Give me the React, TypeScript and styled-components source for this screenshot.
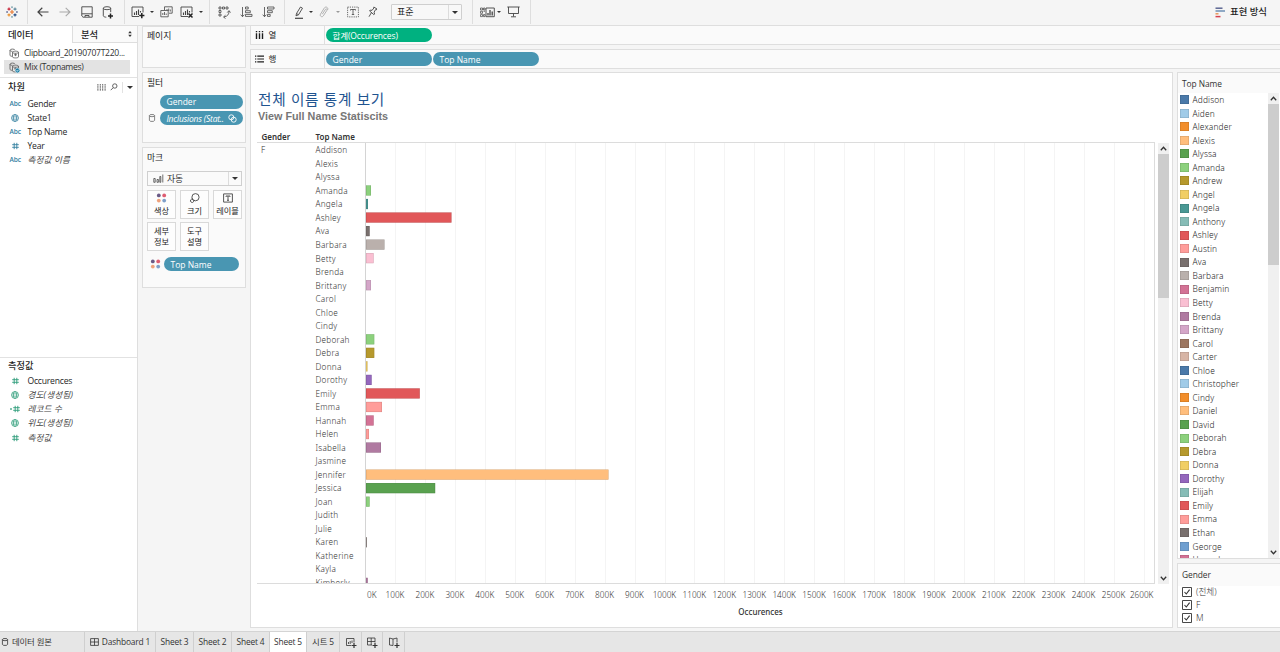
import React from "react";
import styled, { createGlobalStyle } from "styled-components";

const GlobalStyle = createGlobalStyle`
  * { box-sizing: border-box; }
  body {
    margin: 0;
    background: #f5f5f5;
    color: #1e1e1e;
    font-family: "Open Sans", "Noto Sans CJK KR", sans-serif;
    font-size: 8.6px;
    line-height: 14px;
    overflow: hidden;
  }
`;

const BLUE = "#4996b2";
const GREEN = "#00b180";

/* ---------- shell ---------- */

const Page = styled.div`
  width: 1280px;
  height: 652px;
  display: flex;
  flex-direction: column;
  background: #f5f5f5;
  white-space: nowrap;
`;

const Workspace = styled.div`
  flex: 1;
  min-height: 0;
  display: flex;
`;

/* ---------- toolbar ---------- */

const Toolbar = styled.header`
  height: 26px;
  flex: none;
  display: flex;
  background: #f5f5f5;
  border-bottom: 1px solid #dedede;
`;

const ToolGroup = styled.div<{ $w: number; $pl?: number }>`
  width: ${(p) => p.$w}px;
  padding-left: ${(p) => p.$pl ?? 0}px;
  display: flex;
  align-items: center;
  border-right: 1px solid #dedede;
  height: 24px;
`;

const ToolButton = styled.div<{ $w: number; $dim?: boolean }>`
  width: ${(p) => p.$w}px;
  flex: none;
  display: flex;
  justify-content: center;
  align-items: center;
  color: ${(p) => (p.$dim ? "#a9a9a9" : "#444")};
  svg { flex: none; }
`;

const Caret = styled.i<{ $size?: number; $dim?: boolean }>`
  width: 0;
  height: 0;
  border: ${(p) => p.$size ?? 2}px solid transparent;
  border-top-color: ${(p) => (p.$dim ? "#999" : "#333")};
  border-bottom: 0;
`;

const FitSelect = styled.div`
  margin-left: 9px;
  width: 71px;
  height: 16px;
  border: 1px solid #cfcfcf;
  border-radius: 1px;
  background: #f8f8f8;
  display: flex;
  align-items: center;
  padding-left: 5px;
  font-size: 9px;
`;

const SelectArrow = styled.div`
  margin-left: auto;
  width: 13px;
  height: 100%;
  border-left: 1px solid #dcdcdc;
  display: flex;
  align-items: center;
  justify-content: center;
`;

const ShowMe = styled.div`
  margin-left: auto;
  padding-right: 13px;
  display: flex;
  align-items: center;
  gap: 5px;
  font-size: 9.4px;
  font-weight: 500;
  height: 24px;
`;

/* ---------- data pane ---------- */

const DataPane = styled.aside`
  width: 138px;
  flex: none;
  display: flex;
  flex-direction: column;
  background: #fff;
  border-right: 1px solid #dedede;
`;

const PaneTabs = styled.div`
  display: flex;
  height: 17px;
  flex: none;
  font-size: 9.3px;
  line-height: 17px;
  font-weight: 500;
`;

const PaneTab = styled.div<{ $active?: boolean }>`
  width: ${(p) => (p.$active ? 72 : 65)}px;
  padding: 0 5px 0 8px;
  display: flex;
  justify-content: space-between;
  align-items: center;
  border-left: ${(p) => (p.$active ? 0 : 1)}px solid #dedede;
  border-bottom: ${(p) => (p.$active ? 0 : 1)}px solid #dedede;
  background: ${(p) => (p.$active ? "#fff" : "#fafafa")};
`;

const SourceList = styled.div`
  height: 35px;
  flex: none;
  padding: 3px 7px 0 4px;
  border-bottom: 1px solid #e2e2e2;
`;

const Source = styled.div<{ $selected?: boolean }>`
  height: 14px;
  display: flex;
  align-items: center;
  gap: 4px;
  padding-left: 5px;
  letter-spacing: -0.3px;
  background: ${(p) => (p.$selected ? "#e3e3e3" : "transparent")};
  color: #333;
  svg { flex: none; color: #555; }
`;

const SectionHead = styled.div<{ $tight?: boolean }>`
  height: ${(p) => (p.$tight ? 16.5 : 18.5)}px;
  flex: none;
  padding: 0 4px 0 8px;
  display: flex;
  align-items: center;
  font-size: 9.2px;
  font-weight: 500;
`;

const SectionTools = styled.div`
  margin-left: auto;
  height: 11px;
  display: flex;
  align-items: center;
  gap: 4px;
  color: #555;
`;

const ToolsDivider = styled.span`
  width: 1px;
  height: 11px;
  background: #e2e2e2;
`;

const Fields = styled.div`
  height: 260px;
`;

const Field = styled.div<{ $italic?: boolean }>`
  height: 14.15px;
  display: flex;
  align-items: center;
  font-style: ${(p) => (p.$italic ? "italic" : "normal")};
  letter-spacing: ${(p) => (p.$italic ? 0.15 : -0.22)}px;
  color: ${(p) => (p.$italic ? "#444" : "#1e1e1e")};
`;

const FieldIcon = styled.div<{ $green?: boolean }>`
  width: 27.5px;
  padding-left: 3px;
  display: flex;
  justify-content: center;
  font-style: normal;
  letter-spacing: 0;
  color: ${(p) => (p.$green ? "#2c9c79" : "#33809f")};
`;

const Abc = styled.span`
  font-size: 6.6px;
  font-weight: 600;
`;

const Measures = styled.div`
  flex: 1;
  border-top: 1px solid #e2e2e2;
`;

/* ---------- cards ---------- */

const Cards = styled.div`
  width: 104px;
  margin-left: 4px;
  flex: none;
  display: flex;
  flex-direction: column;
  gap: 4px;
`;

const Card = styled.section<{ $h: number; $pt?: number }>`
  height: ${(p) => p.$h}px;
  border: 1px solid #dedede;
  background: #fafafa;
  padding: ${(p) => p.$pt ?? 2}px 3px 0 4px;
  font-size: 8.8px;
`;

const CardTitle = styled.div<{ $h?: number }>`
  height: ${(p) => p.$h ?? 16}px;
  line-height: 16px;
`;

const PillRow = styled.div<{ $mt?: number }>`
  margin-top: ${(p) => p.$mt ?? 0}px;
  display: flex;
  align-items: center;
  height: 16.5px;
`;

const PillLead = styled.div<{ $w: number }>`
  width: ${(p) => p.$w}px;
  flex: none;
  display: flex;
  justify-content: center;
  color: #666;
`;

const Pill = styled.div<{ $w: number; $green?: boolean; $italic?: boolean }>`
  width: ${(p) => p.$w}px;
  height: 14px;
  flex: none;
  border-radius: 7px;
  background: ${(p) => (p.$green ? GREEN : BLUE)};
  color: #fff;
  padding: 0 6.5px;
  display: flex;
  align-items: center;
  justify-content: space-between;
  font-size: 8.5px;
  line-height: 13px;
  letter-spacing: ${(p) => (p.$italic ? "-0.2px" : p.$green ? "-0.12px" : "0")};
  font-style: ${(p) => (p.$italic ? "italic" : "normal")};
  svg { flex: none; }
`;

const MarkSelect = styled.div`
  height: 15px;
  width: 95px;
  margin: 5px 0 4px;
  border: 1px solid #cfcfcf;
  background: #fafafa;
  display: flex;
  align-items: center;
  gap: 3px;
  padding-left: 5px;
  color: #333;
`;

const MarkGrid = styled.div`
  display: grid;
  grid-template-columns: repeat(3, 29px);
  gap: 3px 4px;
`;

const MarkButton = styled.div`
  height: 29px;
  border: 1px solid #d9d9d9;
  background: #fdfdfd;
  display: flex;
  flex-direction: column;
  align-items: center;
  justify-content: center;
  font-size: 8.2px;
  line-height: 10.5px;
  color: #222;
  svg { margin-bottom: 3px; color: #444; }
`;

/* ---------- shelves ---------- */

const Main = styled.div`
  flex: 1;
  min-width: 0;
  margin-left: 4px;
  display: flex;
  flex-direction: column;
`;

const Shelf = styled.div`
  height: 19px;
  flex: none;
  margin-bottom: 4px;
  border: 1px solid #dedede;
  border-width: 0 0 1px 1px;
  background: #fafafa;
  display: flex;
  align-items: center;
  gap: 1px;
  & + & { border-top-width: 1px; height: 20px; margin-bottom: 3px; }
`;

const ShelfLabel = styled.div`
  width: 74px;
  height: 100%;
  padding-left: 4px;
  display: flex;
  align-items: center;
  gap: 4.5px;
  border-right: 1px solid #dedede;
  font-size: 8.5px;
`;

const ViewRow = styled.div`
  flex: 1;
  min-height: 0;
  display: flex;
  gap: 4px;
  padding-bottom: 3px;
`;

/* ---------- chart view ---------- */

const View = styled.section`
  width: 923px;
  flex: none;
  background: #fff;
  border: 1px solid #dedede;
  padding: 18px 3px 0 6px;
  display: flex;
  flex-direction: column;
`;

const Title = styled.h1`
  margin: 0;
  height: 17px;
  padding-left: 1px;
  font: 400 14.6px/17px "Open Sans", "Noto Sans CJK KR", sans-serif;
  letter-spacing: 0.75px;
  color: #1f5490;
`;

const SubTitle = styled.h2`
  margin: 0;
  height: 16px;
  padding-left: 1px;
  font: 700 10.8px/16px "Liberation Sans", Arial, sans-serif;
  color: #767676;
`;

const HeaderRow = styled.div`
  margin-top: 7px;
  height: 12px;
  width: 898px;
  display: flex;
  align-items: center;
  border-bottom: 1px solid #dcdcdc;
  font: 600 8px/10px "Noto Sans", sans-serif;
  color: #333;
`;

const HeaderCell = styled.div<{ $w: number }>`
  width: ${(p) => p.$w}px;
  padding: 1px 0 0 4.5px;
`;

const PlotRow = styled.div`
  height: 441px;
  display: flex;
  gap: 3px;
`;

const Plot = styled.div`
  width: 898px;
  height: 441px;
  display: flex;
  overflow: hidden;
  border-right: 1px solid #dcdcdc;
  border-bottom: 1px solid #dcdcdc;
  font-family: "Noto Sans", sans-serif;
  font-weight: 300;
  font-size: 8.2px;
  color: #333;
`;

const GroupCell = styled.div`
  width: 54px;
  padding-left: 4px;
  line-height: 13px;
`;

const NameList = styled.div`
  width: 54px;
  padding: 0.4px 0 0 4.5px;
  flex: none;
`;

const NameCell = styled.div`
  height: 13.53px;
  line-height: 13.53px;
  letter-spacing: 0.25px;
`;

const Axis = styled.div`
  display: flex;
  width: 898px;
  padding-left: 110px;
  height: 22px;
  font: 300 8.2px/22px "Noto Sans", sans-serif;
  color: #333;
`;

const Tick = styled.div<{ $w: number; $align?: string }>`
  width: ${(p) => p.$w}px;
  flex: none;
  text-align: ${(p) => p.$align ?? "center"};
`;

const AxisTitle = styled.div`
  padding-left: 109px;
  width: 898px;
  text-align: center;
  font: 500 8px/11px "Noto Sans", sans-serif;
  color: #333;
`;

const ScrollTrack = styled.div`
  width: 11px;
  flex: none;
  display: flex;
  flex-direction: column;
  align-items: center;
  background: #f0f0f0;
`;

const ScrollEnd = styled.div`
  height: 11px;
  display: flex;
  align-items: center;
  color: #333;
`;

const ScrollThumb = styled.div<{ $h: number }>`
  width: 100%;
  height: ${(p) => p.$h}px;
  margin-bottom: auto;
  background: #cdcdcd;
`;

/* ---------- right rail ---------- */

const Rail = styled.aside`
  flex: 1;
  display: flex;
  flex-direction: column;
  gap: 4px;
`;

const RailCard = styled.section<{ $h: number }>`
  height: ${(p) => p.$h}px;
  border: 1px solid #dedede;
  border-right: 0;
  background: #fff;
  display: flex;
  flex-direction: column;
`;

const RailTitle = styled.div<{ $h?: number }>`
  height: ${(p) => p.$h ?? 20}px;
  flex: none;
  padding-left: 4px;
  line-height: 22.5px;
  background: #fafafa;
  color: #333;
  font-size: 8.4px;
  letter-spacing: -0.05px;
`;

const LegendBody = styled.div`
  flex: 1;
  min-height: 0;
  display: flex;
  padding-right: 1px;
  overflow: hidden;
`;

const LegendList = styled.div`
  flex: 1;
  overflow: hidden;
`;

const LegendItem = styled.div`
  height: 13.54px;
  padding-left: 2px;
  display: flex;
  align-items: center;
  gap: 3.5px;
  font: 300 8.4px/13.5px "Noto Sans", sans-serif;
  letter-spacing: 0.15px;
  color: #222;
`;

const Swatch = styled.span<{ $c: string }>`
  width: 9px;
  height: 9px;
  background: ${(p) => p.$c};
  box-shadow: inset 0 0 0 0.5px rgba(0, 0, 0, 0.18);
`;

const CheckRow = styled.div`
  height: 12.8px;
  flex: none;
  padding-left: 4px;
  display: flex;
  align-items: center;
  gap: 4px;
  font: 300 8.6px/13px "Noto Sans", "Noto Sans CJK KR", sans-serif;
  color: #333;
`;

/* ---------- sheet tabs ---------- */

const SheetBar = styled.footer`
  height: 21px;
  flex: none;
  display: flex;
  background: #e6e6e6;
  border-top: 1px solid #d4d4d4;
`;

const SheetTab = styled.div<{ $w: number; $active?: boolean; $left?: boolean }>`
  width: ${(p) => p.$w}px;
  display: flex;
  align-items: center;
  justify-content: ${(p) => (p.$left ? "flex-start" : "center")};
  gap: 3px;
  padding-left: ${(p) => (p.$left ? 1 : 0)}px;
  border-right: 1px solid #cfcfcf;
  background: ${(p) => (p.$active ? "#fff" : "transparent")};
  color: #333;
  font-size: 8.4px;
  letter-spacing: -0.15px;
`;

/* ---------- icons ---------- */

type IconProps = { w?: number; h?: number; children: React.ReactNode; box?: string; sw?: number };
const Icon = ({ w = 14, h = 14, box, sw = 1, children }: IconProps) => (
  <svg width={w} height={h} viewBox={box ?? `0 0 ${w} ${h}`} fill="none" stroke="currentColor" strokeWidth={sw}>
    {children}
  </svg>
);

const Logo = () => (
  <Icon w={12} h={12} sw={1.1}>
    <path d="M6 4v4M4 6h4" stroke="#e8762c" />
    <path d="M3 1.6v3M1.5 3.1h3" stroke="#c72035" />
    <path d="M9 1.6v3M7.5 3.1h3" stroke="#5b879b" />
    <path d="M3 7.4v3M1.5 8.9h3" stroke="#eb912c" />
    <path d="M9 7.4v3M7.5 8.9h3" stroke="#1f457e" />
    <path d="M6 .3v1.8M5.1 1.2h1.8M6 10v1.8M5.1 10.9h1.8" stroke="#7099a6" strokeWidth=".8" />
    <path d="M1.1 5v2M.2 6h1.8M10.9 5v2M10 6h1.8" stroke="#5c6692" strokeWidth=".8" />
  </Icon>
);

const Back = () => <Icon w={12} h={10} sw={1.2}><path d="M11.5 5H1M5.3.8 1 5l4.3 4.2" /></Icon>;
const Forward = () => <Icon w={12} h={10} sw={1.1}><path d="M.5 5H11M6.7.8 11 5 6.7 9.2" /></Icon>;
const Save = () => (
  <Icon w={12} h={12} sw={0.9}>
    <path d="M.8.8h10.4v10.4H2L.8 10zM.8 7.8h10.4M4 11V9.500h4V11" />
  </Icon>
);
const Cylinder = () => (
  <Icon w={8} h={8} sw={0.8}>
    <ellipse cx="4" cy="1.600" rx="2.600" ry="1.100" />
    <path d="M1.400 1.600v4.800c0 1.400 5.200 1.400 5.200 0V1.600" />
  </Icon>
);
const AddSource = () => (
  <Icon w={12} h={13} sw={0.9}>
    <ellipse cx="5" cy="2.200" rx="3.700" ry="1.500" />
    <path d="M1.300 2.200v7.500c0 .9 1.500 1.400 3 1.500M8.700 2.200v4" />
    <path d="M8.500 7.500v5M6 10h5" stroke="#222" strokeWidth="1.500" />
  </Icon>
);
const SheetGlyph = ({ clear }: { clear?: boolean }) => (
  <Icon w={14} h={13}>
    <path d="M8 10.500H1V1h11v5.500" strokeWidth=".9" />
    <path d="M3.500 9V6.500M5.500 9V5M7.500 9V3.500M9.500 6.500V5" strokeWidth="1.100" />
    {clear ? (
      <path d="m8.500 7.500 4 4M12.500 7.500l-4 4" stroke="#222" strokeWidth="1.500" />
    ) : (
      <path d="M10.800 7v5.200M8.200 9.600h5.200" stroke="#222" strokeWidth="1.500" />
    )}
  </Icon>
);
const Duplicate = () => (
  <Icon w={13} h={12} sw={0.8}>
    <path d="M4.500 4V.8h7.700v6.400H9M.8 4.500h7.400v6.300H.8zM2.800 9V7M4.500 9V6M6.200 9V7.500M7 4V3M8.700 5V2.500M10.300 5.500v-2" />
  </Icon>
);
const Swap = () => (
  <Icon w={13} h={13} sw={0.8}>
    <path d="M1 1h2v2H1zM4.500 1h2v2h-2zM8 1h2v2H8zM1 4.500h2v2H1zM1 8h2v2H1z" />
    <path d="M11 5c.3 3-1.500 5.500-5 6M9.200 6.600 11 4.600l1.500 2M7.500 9.200 5.500 11l2 1.500" />
  </Icon>
);
const Sort = ({ desc }: { desc?: boolean }) => (
  <Icon w={13} h={12} sw={0.8}>
    <path d="M2.500 1v9.500M.7 8.700l1.800 2 1.800-2" />
    {desc ? (
      <path d="M5.500 1h6.500v2H5.500zM5.500 4.700h4.800v2H5.500zM5.500 8.400h2.700v2H5.500z" />
    ) : (
      <path d="M5.500 1h2.700v2H5.500zM5.500 4.700h4.800v2H5.500zM5.500 8.400h6.500v2H5.500z" />
    )}
  </Icon>
);
const Pen = () => (
  <Icon w={10} h={13} sw={0.9}>
    <path d="M2 9.800 2.500 7.500 6.500 1l2 1.200-4 6.600zM2.500 7.500l2 1.200" />
    <path d="M1 12.300h8" strokeWidth="1.200" />
  </Icon>
);
const Clip = () => (
  <Icon w={10} h={12} sw={0.9}>
    <path d="M3.300 8.200 6.500 3.300c.8-1 2.100-.2 1.500.9L4.300 9.900C3 11.700.4 10.200 1.500 8.100L5.300 2C6.700 0 9.600 1.500 8.700 3.800" />
  </Icon>
);
const TextBox = () => (
  <Icon w={12} h={12} sw={0.8}>
    <path d="M.6 1.100h10.800v9.800H.6z" strokeDasharray="1.200 1" />
    <path d="M3.500 4.500v-1h5v1M6 3.500v5M4.800 8.500h2.400" />
  </Icon>
);
const Pin = () => (
  <Icon w={10} h={12} sw={0.9}>
    <path d="m5.800 1 3.200 2-.8.9-.7-.2-1.400 2.500.5 1.900-.8.5L1.500 4.900l.6-.7 2 .1L5.900 2zM3.500 6.500 1 10.700" />
  </Icon>
);
const CardsIcon = () => (
  <Icon w={15} h={11} sw={0.9}>
    <path d="M.5 1h2v2h-2zM.5 4.300h2v2h-2zM.5 7.600h2v2h-2zM3.500 1H5v2H3.500zM3.500 4.300H5M3.500 7.600H5v2H3.500z" strokeWidth=".7" />
    <path d="M6 1h8.300v8.700H6z" />
    <path d="M8 8.500V6M10 8.500V3M12.200 8.500V4.500" strokeWidth="1.300" />
  </Icon>
);
const Present = () => (
  <Icon w={13} h={12} sw={0.9}>
    <path d="M.3 1h12.400M1.500 1v6.500h10V1M6.500 7.500v3M4 10.800h5" />
  </Icon>
);
const ShowMeIcon = () => (
  <Icon w={10} h={11} sw={1.5}>
    <path d="M.5 1.200h7" stroke="#5c6692" />
    <path d="M.5 4h9.500" stroke="#6d8fb5" />
    <path d="M.5 6.800h3" stroke="#e8965a" />
    <path d="M.5 9.600h5" stroke="#d7404e" />
  </Icon>
);
const SourceIcon = ({ active }: { active?: boolean }) => (
  <Icon w={11} h={11} sw={0.8}>
    <path d="M1 2.200c0-1.500 5-1.500 5 0M1 2.200v5c0 .6.800 1 2 1.100M1 2.200c0 .9 1.500 1.200 2.500 1.100" />
    <path d="M3.500 4.300c0-1.500 6-1.500 6 0v4.500c0 1.500-6 1.500-6 0zM3.500 4.300c0 1.300 6 1.300 6 0M5 6.800h3M6.500 5.500v2.600" />
    {active && <circle cx="8.500" cy="8.500" r="2.400" fill="#1b7fa6" stroke="#fff" strokeWidth=".5" />}
    {active && <path d="m7.400 8.500.8.8 1.400-1.600" stroke="#fff" />}
  </Icon>
);
const Globe = () => (
  <Icon w={8} h={8} sw={0.7}>
    <circle cx="4" cy="4" r="3.500" />
    <ellipse cx="4" cy="4" rx="1.600" ry="3.500" />
    <path d="M.5 4h7M1.100 2.300h5.800M1.100 5.700h5.800" strokeWidth=".5" />
  </Icon>
);
const Hash = () => (
  <Icon w={7} h={8} sw={0.9}>
    <path d="M2.200.8v6.400M4.800.8v6.400M.2 2.700h6.600M.2 5.300h6.600" />
  </Icon>
);
const HashCalc = () => (
  <Icon w={11} h={8} sw={0.9}>
    <path d="M5.200.8v6.400M7.800.8v6.400M3.200 2.700h6.600M3.200 5.300h6.600M.2 4h1.600M1 3.200v1.600" />
  </Icon>
);
const Dots = () => (
  <Icon w={11} h={10} sw={0}>
    <circle cx="2.800" cy="2.400" r="1.900" fill="#6a5a86" />
    <circle cx="8.200" cy="2.400" r="1.900" fill="#de5d72" />
    <circle cx="2.800" cy="7.600" r="1.900" fill="#efa27c" />
    <circle cx="8.200" cy="7.600" r="1.900" fill="#7f9fc9" />
  </Icon>
);
const SizeIcon = () => (
  <Icon w={11} h={10} sw={0.9}>
    <circle cx="6.500" cy="4.200" r="3.600" />
    <path d="M4 6.300a1.700 1.700 0 1 0 .5 2.500M4.500 8.800c.5-.5.400-1.500.2-2" />
  </Icon>
);
const LabelIcon = () => (
  <Icon w={10} h={10} sw={0.9}>
    <path d="M.6.9h8.800v8.200H.6zM3 3.800V3h4v.8M5 3v4.300M4 7.300h2" />
  </Icon>
);
const BarsIcon = () => (
  <Icon w={11} h={9} sw={0.7}>
    <path d="M.8 4.500h1.400v3.800H.8zM4 5.500h1.400v2.800H4zM6.800 2.500h1v5.800h-1zM9.800.5v8" />
  </Icon>
);
const Link = () => (
  <Icon w={9} h={9} sw={0.9}>
    <circle cx="3.300" cy="3.300" r="2.500" />
    <circle cx="5.700" cy="5.700" r="2.500" />
  </Icon>
);
const ColumnsIcon = () => (
  <Icon w={9} h={8} sw={1.4}>
    <path d="M1.500 0v1.200M4.500 0v1.200M7.500 0v1.200M1.500 2.200V8M4.500 2.200V8M7.500 2.200V8" />
  </Icon>
);
const RowsIcon = () => (
  <Icon w={9} h={8} sw={1.2}>
    <path d="M0 1.200h1.300M0 4h1.300M0 6.800h1.300M2.300 1.200H9M2.300 4H9M2.300 6.800H9" />
  </Icon>
);
const GridIcon = () => (
  <Icon w={9} h={7} sw={0.9}>
    <path d="M.9 0v7M3.300 0v7M5.700 0v7M8.100 0v7" strokeDasharray="1.300 .3" />
  </Icon>
);
const Search = () => (
  <Icon w={8} h={8} sw={0.9}>
    <circle cx="4.800" cy="3" r="2.200" />
    <path d="M3.200 4.700.7 7.200" />
  </Icon>
);
const UpDown = () => <Icon w={4} h={6} sw={0}><path d="M2 0 3.800 2.300H.2zM2 6 3.800 3.700H.2z" fill="#333" /></Icon>;
const Chevron = ({ down }: { down?: boolean }) => (
  <Icon w={7} h={5} sw={1.3}><path d={down ? "M.8.8 3.500 3.700 6.200.8" : "M.8 4.200 3.500 1.300 6.200 4.200"} /></Icon>
);
const Check = () => (
  <Icon w={10} h={10} sw={0.9}>
    <path d="M.5.5h9v9h-9z" />
    <path d="m2.500 5 1.800 2 3.300-4.300" strokeWidth="1.100" />
  </Icon>
);
const DashIcon = () => <Icon w={9} h={8} sw={0.8}><path d="M.6.6h7.800v6.800H.6zM4.500.6v6.800M.6 4h7.800" /></Icon>;
const NewSheet = () => (
  <Icon w={12} h={11} sw={0.8}>
    <path d="M6 8.500H1.500v-7h7.500v4M3.500 7V5M5.200 7V4M7 6V3.500" />
    <path d="M9 6v5M6.500 8.500h5" strokeWidth="1.200" />
  </Icon>
);
const NewDash = () => (
  <Icon w={12} h={11} sw={0.8}>
    <path d="M6 8H1.500V1H9v4.500M5.200 1v7M1.500 4.500H9" />
    <path d="M9 6v5M6.500 8.500h5" strokeWidth="1.200" />
  </Icon>
);
const NewStory = () => (
  <Icon w={12} h={11} sw={0.8}>
    <path d="M5 8.500 1.500 8V1L5 2l4-1v4.500M5 2v6.500" />
    <path d="M9 6v5M6.500 8.500h5" strokeWidth="1.200" />
  </Icon>
);

/* ---------- data ---------- */

const C = {
  blue: "#4a79a9", sky: "#a0cbe8", orange: "#f28e2b", peach: "#ffbe7d", green: "#59a14f", lime: "#8cd17d",
  olive: "#b6992d", yellow: "#f1ce63", teal: "#499894", mint: "#86bcb6", red: "#e15759", salmon: "#ff9d9a",
  gray: "#79706e", stone: "#bab0ac", rose: "#d37295", pink: "#fabfd2", plum: "#b07aa1", lilac: "#d4a6c8",
  brown: "#9d7660", tan: "#d7b5a6", violet: "#9467bd", azure: "#6f9fd0",
};

const rows: [string, number?, string?][] = [
  ["Addison"], ["Alexis"], ["Alyssa"], ["Amanda", 5, C.lime], ["Angela", 2, C.teal], ["Ashley", 85.5, C.red],
  ["Ava", 3.7, C.gray], ["Barbara", 18.5, C.stone], ["Betty", 7.7, C.pink], ["Brenda"], ["Brittany", 5, C.lilac],
  ["Carol"], ["Chloe"], ["Cindy"], ["Deborah", 8.3, C.lime], ["Debra", 8.3, C.olive], ["Donna", 1.5, C.yellow],
  ["Dorothy", 5.7, C.violet], ["Emily", 53.8, C.red], ["Emma", 16, C.salmon], ["Hannah", 7.7, C.rose],
  ["Helen", 3, C.salmon], ["Isabella", 15, C.plum], ["Jasmine"], ["Jennifer", 242.5, C.peach],
  ["Jessica", 69.2, C.green], ["Joan", 3.7, C.lime], ["Judith"], ["Julie"], ["Karen", 0.9, C.gray],
  ["Katherine"], ["Kayla"], ["Kimberly", 1.8, C.plum],
];

const legend: [string, string][] = [
  ["Addison", C.blue], ["Aiden", C.sky], ["Alexander", C.orange], ["Alexis", C.peach], ["Alyssa", C.green],
  ["Amanda", C.lime], ["Andrew", C.olive], ["Angel", C.yellow], ["Angela", C.teal], ["Anthony", C.mint],
  ["Ashley", C.red], ["Austin", C.salmon], ["Ava", C.gray], ["Barbara", C.stone], ["Benjamin", C.rose],
  ["Betty", C.pink], ["Brenda", C.plum], ["Brittany", C.lilac], ["Carol", C.brown], ["Carter", C.tan],
  ["Chloe", C.blue], ["Christopher", C.sky], ["Cindy", C.orange], ["Daniel", C.peach], ["David", C.green],
  ["Deborah", C.lime], ["Debra", C.olive], ["Donna", C.yellow], ["Dorothy", C.violet], ["Elijah", C.mint],
  ["Emily", C.red], ["Emma", C.salmon], ["Ethan", C.gray], ["George", C.azure], ["Hannah", C.rose],
];

const STEP = 29.95;
const ROW = 13.53;

const ChartSvg = styled.svg`
  flex: none;
`;

const Bars = () => (
  <ChartSvg width="789" height="440" viewBox="0 0 789 440">
    {Array.from({ length: 26 }, (_, i) => {
      const x = Math.round((i + 1) * STEP) + 0.5;
      return <line key={i} x1={x} x2={x} y1="0" y2="440" stroke="#f4f4f4" />;
    })}
    {rows.map(([name, value, color], i) =>
      value ? (
        <g key={name}>
          <rect x="1" y={i * ROW + 1.8} width={value} height="10.200" fill={color} />
          {value > 1 && (
            <rect
              x="1.250"
              y={i * ROW + 2.05}
              width={value - 0.5}
              height="9.700"
              fill="none"
              stroke="#000"
              strokeOpacity=".15"
              strokeWidth=".5"
            />
          )}
        </g>
      ) : null
    )}
    <line x1=".5" x2=".5" y1="0" y2="440" stroke="#d4d4d4" />
  </ChartSvg>
);

const ScrollBar = ({ thumb }: { thumb: number }) => (
  <ScrollTrack>
    <ScrollEnd><Chevron /></ScrollEnd>
    <ScrollThumb $h={thumb} />
    <ScrollEnd><Chevron down /></ScrollEnd>
  </ScrollTrack>
);

export default function App() {
  return (
    <Page>
      <GlobalStyle />
      <Toolbar>
        <ToolGroup $w={28} $pl={2}><ToolButton $w={20}><Logo /></ToolButton></ToolGroup>
        <ToolGroup $w={97} $pl={4}>
          <ToolButton $w={22}><Back /></ToolButton>
          <ToolButton $w={22} $dim><Forward /></ToolButton>
          <ToolButton $w={21}><Save /></ToolButton>
          <ToolButton $w={22}><AddSource /></ToolButton>
        </ToolGroup>
        <ToolGroup $w={85} $pl={3}>
          <ToolButton $w={20}><SheetGlyph /></ToolButton>
          <ToolButton $w={8}><Caret /></ToolButton>
          <ToolButton $w={20}><Duplicate /></ToolButton>
          <ToolButton $w={22}><SheetGlyph clear /></ToolButton>
          <ToolButton $w={5}><Caret /></ToolButton>
        </ToolGroup>
        <ToolGroup $w={75} $pl={3}>
          <ToolButton $w={22}><Swap /></ToolButton>
          <ToolButton $w={22}><Sort /></ToolButton>
          <ToolButton $w={22}><Sort desc /></ToolButton>
        </ToolGroup>
        <ToolGroup $w={188} $pl={5}>
          <ToolButton $w={18}><Pen /></ToolButton>
          <ToolButton $w={6}><Caret /></ToolButton>
          <ToolButton $w={20} $dim><Clip /></ToolButton>
          <ToolButton $w={8}><Caret $dim /></ToolButton>
          <ToolButton $w={22}><TextBox /></ToolButton>
          <ToolButton $w={18}><Pin /></ToolButton>
          <FitSelect>표준<SelectArrow><Caret $size={3} /></SelectArrow></FitSelect>
        </ToolGroup>
        <ToolGroup $w={58} $pl={5}>
          <ToolButton $w={18}><CardsIcon /></ToolButton>
          <ToolButton $w={5}><Caret /></ToolButton>
          <ToolButton $w={24}><Present /></ToolButton>
        </ToolGroup>
        <ShowMe><ShowMeIcon />표현 방식</ShowMe>
      </Toolbar>

      <Workspace>
        <DataPane>
          <PaneTabs>
            <PaneTab $active>데이터</PaneTab>
            <PaneTab>분석<UpDown /></PaneTab>
          </PaneTabs>
          <SourceList>
            <Source><SourceIcon />Clipboard_20190707T220...</Source>
            <Source $selected><SourceIcon active />Mix (Topnames)</Source>
          </SourceList>
          <SectionHead>
            차원
            <SectionTools><GridIcon /><Search /><ToolsDivider /><Caret $size={3} /></SectionTools>
          </SectionHead>
          <Fields>
            <Field><FieldIcon><Abc>Abc</Abc></FieldIcon>Gender</Field>
            <Field><FieldIcon><Globe /></FieldIcon>State1</Field>
            <Field><FieldIcon><Abc>Abc</Abc></FieldIcon>Top Name</Field>
            <Field><FieldIcon><Hash /></FieldIcon>Year</Field>
            <Field $italic><FieldIcon><Abc>Abc</Abc></FieldIcon>측정값 이름</Field>
          </Fields>
          <Measures>
            <SectionHead $tight>측정값</SectionHead>
            <Field><FieldIcon $green><Hash /></FieldIcon>Occurences</Field>
            <Field $italic><FieldIcon $green><Globe /></FieldIcon>경도(생성됨)</Field>
            <Field $italic><FieldIcon $green><HashCalc /></FieldIcon>레코드 수</Field>
            <Field $italic><FieldIcon $green><Globe /></FieldIcon>위도(생성됨)</Field>
            <Field $italic><FieldIcon $green><Hash /></FieldIcon>측정값</Field>
          </Measures>
        </DataPane>

        <Cards>
          <Card $h={42} $pt={1}><CardTitle>페이지</CardTitle></Card>
          <Card $h={71}>
            <CardTitle $h={18.5}>필터</CardTitle>
            <PillRow><PillLead $w={13} /><Pill $w={83}>Gender</Pill></PillRow>
            <PillRow><PillLead $w={9.5}><Cylinder /></PillLead><PillLead $w={3.5} /><Pill $w={83} $italic>Inclusions (Stat..<Link /></Pill></PillRow>
          </Card>
          <Card $h={141}>
            <CardTitle>마크</CardTitle>
            <MarkSelect><BarsIcon />자동<SelectArrow><Caret $size={3} /></SelectArrow></MarkSelect>
            <MarkGrid>
              <MarkButton><Dots />색상</MarkButton>
              <MarkButton><SizeIcon />크기</MarkButton>
              <MarkButton><LabelIcon />레이블</MarkButton>
              <MarkButton><span>세부</span><span>정보</span></MarkButton>
              <MarkButton><span>도구</span><span>설명</span></MarkButton>
            </MarkGrid>
            <PillRow $mt={5}><PillLead $w={17}><Dots /></PillLead><Pill $w={75}>Top Name</Pill></PillRow>
          </Card>
        </Cards>

        <Main>
          <Shelf><ShelfLabel><ColumnsIcon />열</ShelfLabel><Pill $w={106} $green>합계(Occurences)</Pill></Shelf>
          <Shelf><ShelfLabel><RowsIcon />행</ShelfLabel><Pill $w={106}>Gender</Pill><Pill $w={106}>Top Name</Pill></Shelf>
          <ViewRow>
            <View>
              <Title>전체 이름 통계 보기</Title>
              <SubTitle>View Full Name Statiscits</SubTitle>
              <HeaderRow><HeaderCell $w={54}>Gender</HeaderCell><HeaderCell $w={54}>Top Name</HeaderCell></HeaderRow>
              <PlotRow>
                <Plot>
                  <GroupCell>F</GroupCell>
                  <NameList>{rows.map(([n]) => <NameCell key={n}>{n}</NameCell>)}</NameList>
                  <Bars />
                </Plot>
                <ScrollBar thumb={144} />
              </PlotRow>
              <Axis>
                <Tick $w={13} $align="left">0K</Tick>
                {Array.from({ length: 25 }, (_, i) => <Tick key={i} $w={STEP}>{(i + 1) * 100}K</Tick>)}
                <Tick $w={25} $align="right">2600K</Tick>
              </Axis>
              <AxisTitle>Occurences</AxisTitle>
            </View>
            <Rail>
              <RailCard $h={487}>
                <RailTitle>Top Name</RailTitle>
                <LegendBody>
                  <LegendList>{legend.map(([n, c]) => <LegendItem key={n}><Swatch $c={c} />{n}</LegendItem>)}</LegendList>
                  <ScrollBar thumb={161} />
                </LegendBody>
              </RailCard>
              <RailCard $h={65}>
                <RailTitle $h={22}>Gender</RailTitle>
                <CheckRow><Check />(전체)</CheckRow>
                <CheckRow><Check />F</CheckRow>
                <CheckRow><Check />M</CheckRow>
              </RailCard>
            </Rail>
          </ViewRow>
        </Main>
      </Workspace>

      <SheetBar>
        <SheetTab $w={85} $left><Cylinder />데이터 원본</SheetTab>
        <SheetTab $w={71}><DashIcon />Dashboard 1</SheetTab>
        <SheetTab $w={38}>Sheet 3</SheetTab>
        <SheetTab $w={38}>Sheet 2</SheetTab>
        <SheetTab $w={38}>Sheet 4</SheetTab>
        <SheetTab $w={37} $active>Sheet 5</SheetTab>
        <SheetTab $w={33}>시트 5</SheetTab>
        <SheetTab $w={22}><NewSheet /></SheetTab>
        <SheetTab $w={21}><NewDash /></SheetTab>
        <SheetTab $w={22}><NewStory /></SheetTab>
      </SheetBar>
    </Page>
  );
}
